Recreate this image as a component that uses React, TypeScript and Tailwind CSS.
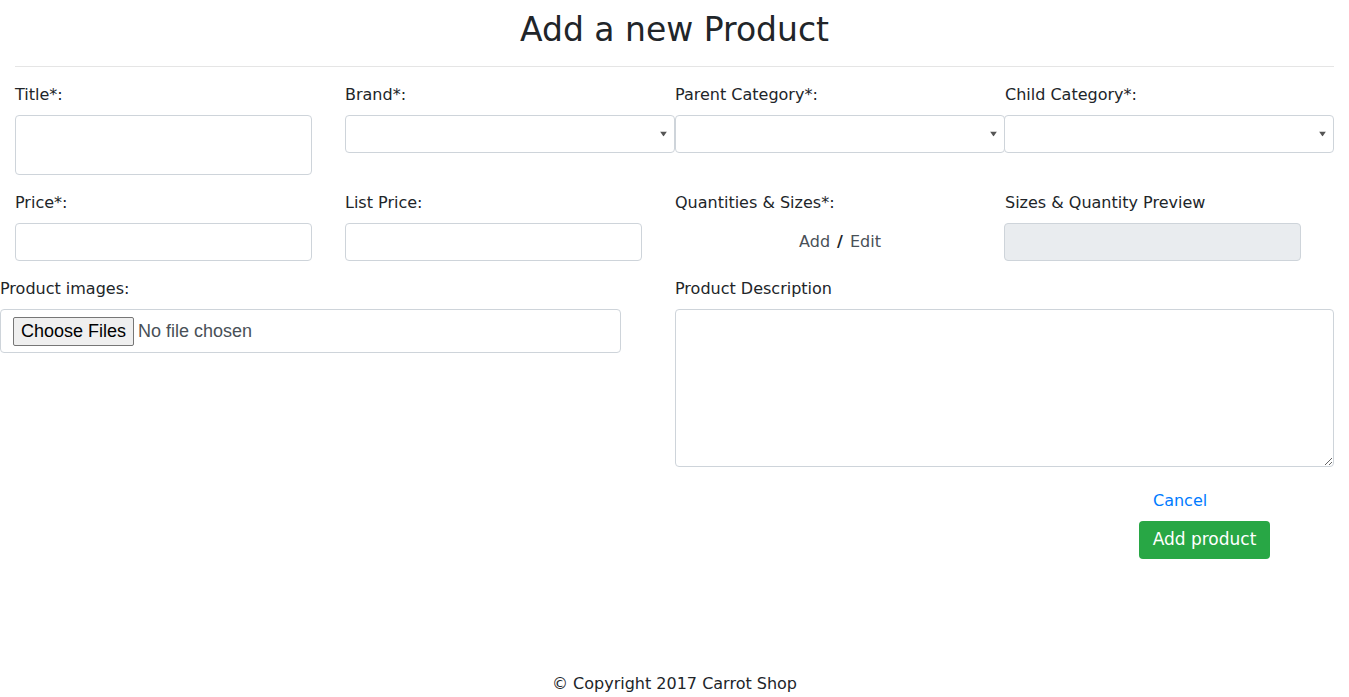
import React from 'react';

function Caret() {
  return (
    <svg
      className="pointer-events-none absolute right-[8px] top-1/2 -translate-y-1/2"
      width="7"
      height="5"
      viewBox="0 0 7 5"
    >
      <path d="M0 0h7L3.5 5z" fill="#555" />
    </svg>
  );
}

function SelectBox() {
  return (
    <div className="relative w-[330px]">
      <select className="block h-[38px] w-[330px] appearance-none rounded-[4px] border border-[#ced4da] bg-white px-3 text-[16px] outline-none">
        <option></option>
      </select>
      <Caret />
    </div>
  );
}

function Label({ children }: { children: React.ReactNode }) {
  return <label className="mb-[8px] block leading-6 text-[#212529]">{children}</label>;
}

export default function App() {
  return (
    <div className="min-h-screen bg-white font-['DejaVu_Sans',sans-serif] text-[16px] text-[#212529]">
      <h1 className="h-[66px] pt-[10px] text-center text-[33px] leading-[40px] font-normal text-[#212529]">
        Add a new Product
      </h1>
      <div className="mx-[15px] border-t border-[#e5e5e5]" />

      <form className="pt-[16px]">
        {/* first row */}
        <div className="flex">
          <div className="w-[330px] px-[15px]">
            <Label>Title*:</Label>
            <input className="block h-[60px] w-[297px] rounded-[4px] border border-[#ced4da] px-3 outline-none" />
          </div>
          <div className="w-[330px] pl-[15px]">
            <Label>Brand*:</Label>
            <SelectBox />
          </div>
          <div className="w-[330px] pl-[15px]">
            <Label>Parent Category*:</Label>
            <SelectBox />
          </div>
          <div className="w-[330px] pl-[14px]">
            <div className="pl-[1px]">
              <Label>Child Category*:</Label>
            </div>
            <SelectBox />
          </div>
        </div>

        {/* second row */}
        <div className="mt-[16px] flex">
          <div className="w-[330px] px-[15px]">
            <Label>Price*:</Label>
            <input className="block h-[38px] w-[297px] rounded-[4px] border border-[#ced4da] px-3 outline-none" />
          </div>
          <div className="w-[330px] px-[15px]">
            <Label>List Price:</Label>
            <input className="block h-[38px] w-[297px] rounded-[4px] border border-[#ced4da] px-3 outline-none" />
          </div>
          <div className="w-[330px] pl-[15px]">
            <Label>Quantities &amp; Sizes*:</Label>
            <div className="flex h-[38px] items-center justify-center pl-[15px] text-[#495057]">
              <span>Add</span>
              <span className="mx-[7px] font-bold text-[#212529]">/</span>
              <span>Edit</span>
            </div>
          </div>
          <div className="w-[330px] pl-[14px]">
            <div className="pl-[1px]">
              <Label>Sizes &amp; Quantity Preview</Label>
            </div>
            <input
              disabled
              className="block h-[38px] w-[297px] rounded-[4px] border border-[#ced4da] bg-[#e9ecef] px-3"
            />
          </div>
        </div>

        {/* third row */}
        <div className="mt-[16px] flex">
          <div className="w-[621px]">
            <Label>Product images:</Label>
            <div className="flex h-[44px] items-center rounded-[4px] border border-[#ced4da] pl-[12px] font-['Liberation_Sans',sans-serif] text-[#495057]">
              <span className="flex h-[29px] items-center rounded-[2px] border border-[#767676] bg-[#efefef] px-[7px] text-[18px] text-black">
                Choose Files
              </span>
              <span className="ml-[4px] text-[18px]">No file chosen</span>
            </div>
          </div>
          <div className="ml-[54px] w-[659px]">
            <Label>Product Description</Label>
            <textarea className="block h-[158px] w-[659px] rounded-[4px] border border-[#ced4da] px-3 py-1.5 outline-none" />
          </div>
        </div>

        {/* actions */}
        <div className="mt-[22px] flex justify-end pr-[79px]">
          <div className="flex w-[131px] flex-col items-start">
            <a href="#" className="ml-[14px] leading-6 text-[#007bff]">
              Cancel
            </a>
            <button
              type="button"
              className="mt-[8px] h-[38px] w-[131px] rounded-[4px] bg-[#28a745] text-[17px] text-white"
            >
              Add product
            </button>
          </div>
        </div>
      </form>

      <footer className="mt-[113px] text-center leading-6 text-[#212529]">© Copyright 2017 Carrot Shop</footer>
    </div>
  );
}
